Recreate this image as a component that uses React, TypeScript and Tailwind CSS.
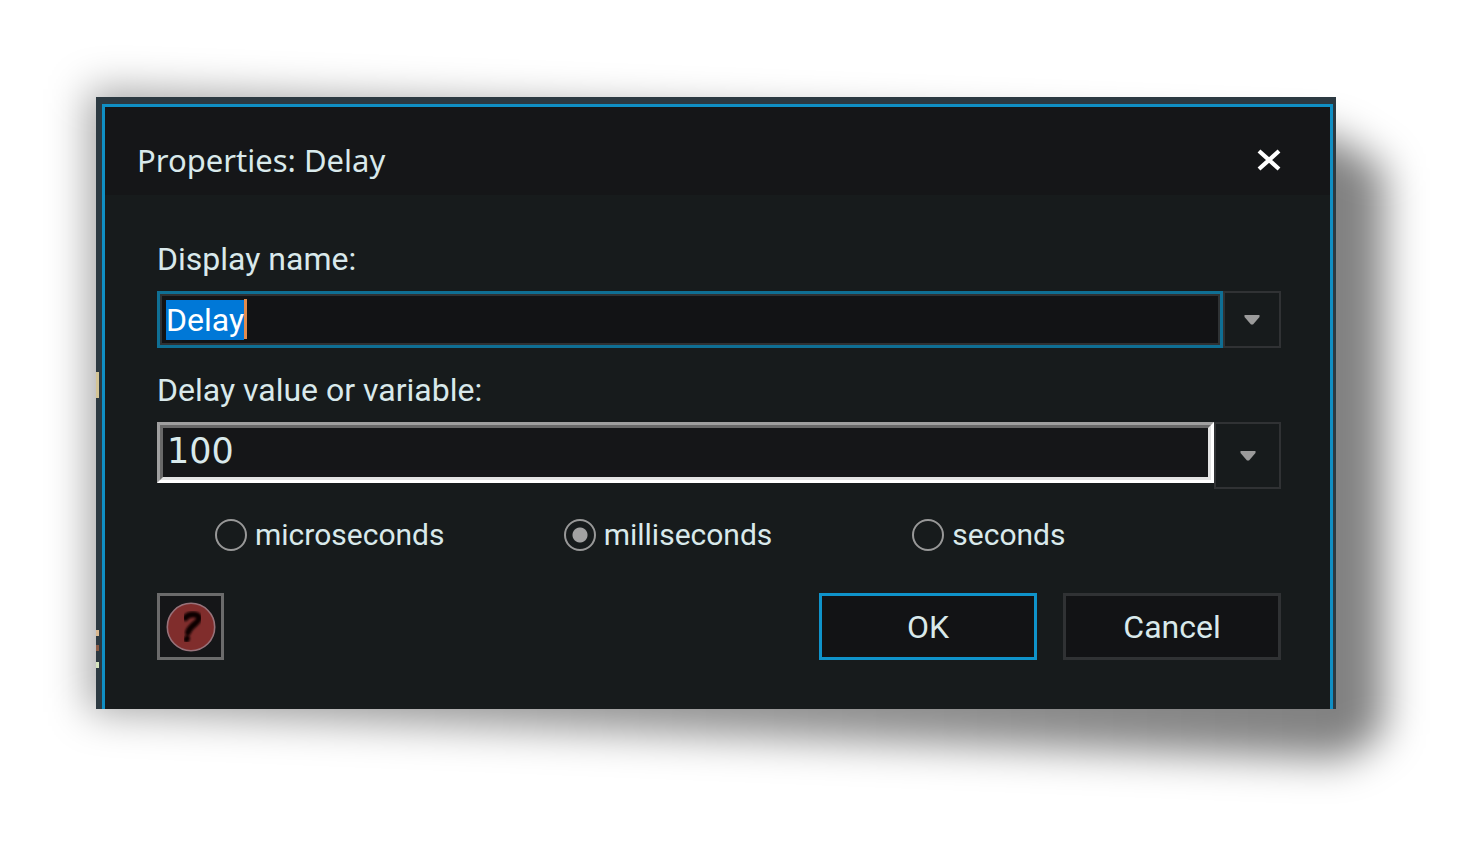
import { useState } from "react";

const UNITS = ["microseconds", "milliseconds", "seconds"];

function DropArrow() {
  return (
    <svg width="16" height="10" viewBox="0 0 16 10" aria-hidden="true">
      <path d="M.5 0h15v2L9 9.500H7L.5 2z" fill="#9b9b9b" />
    </svg>
  );
}

function HelpIcon() {
  return (
    <svg width="50" height="50" viewBox="0 0 50 50" aria-hidden="true">
      <defs>
        <filter id="mark-soft">
          <feGaussianBlur stdDeviation="0.8" />
        </filter>
      </defs>
      <circle cx="25" cy="25" r="23.7" fill="#802d2c" stroke="#97727a" strokeWidth="1.6" />
      <g
        fill="none"
        stroke="#0c0202"
        strokeWidth="6"
        strokeLinecap="round"
        strokeLinejoin="round"
        filter="url(#mark-soft)"
      >
        <path d="M19.500 16c3-5 14.500-4.500 13.500.5-1 5-9 7-11 14" />
        <path d="M20.500 37.500l.5-1" />
      </g>
    </svg>
  );
}

export default function App() {
  const [name, setName] = useState("Delay");
  const [value, setValue] = useState("100");
  const [unit, setUnit] = useState("milliseconds");

  return (
    <main className="min-h-screen overflow-hidden bg-white pt-[97px] pr-[138px] pb-16 pl-24 font-['Roboto','Liberation_Sans',sans-serif] text-[32px] leading-10 text-[#d9e9eb]">
      <div className="relative isolate">
        {/* Slanted drop shadow */}
        <div className="absolute -top-2 -right-12 -bottom-[50px] -left-2 -z-10 blur-[20px]" aria-hidden="true">
          <div className="h-full w-full bg-linear-to-r from-black/35 to-black/50 [clip-path:polygon(0_0,96%_7%,100%_12%,100%_96%,97%_100%,0_93%)]" />
        </div>

        <section
          role="dialog"
          aria-labelledby="dialog-title"
          className="relative bg-[#2c3941] pt-[7px] pr-[3px] pl-[6px]"
        >
          <span className="absolute top-[275px] left-0 h-[26px] w-[3px] bg-[#d3c496]" />
          <span className="absolute top-[533px] left-0 h-[6px] w-[3px] bg-[#d8b890]" />
          <span className="absolute top-[548px] left-0 h-[6px] w-[3px] bg-[#8a5a44]" />
          <span className="absolute top-[565px] left-0 h-[6px] w-[3px] bg-[#d5e3bd]" />

          <div className="border-x-[3px] border-t-[3px] border-[#108fc4] bg-[#171b1c]">
            <header className="flex h-[88px] items-center justify-between bg-[#151618] pt-[18px] pr-12 pl-8">
              <h1 id="dialog-title" className="font-['Noto_Sans','Open_Sans',sans-serif] text-[31px]">
                Properties: Delay
              </h1>
              <button type="button" aria-label="Close" className="py-2">
                <svg width="26" height="24" viewBox="0 0 26 24" aria-hidden="true">
                  <path d="M3 3l20 18M23 3L3 21" stroke="#fff" strokeWidth="4.200" />
                </svg>
              </button>
            </header>

            <form className="pt-11 pr-[49px] pb-[49px] pl-[52px]" onSubmit={(e) => e.preventDefault()}>
              <label htmlFor="display-name" className="block">
                Display name:
              </label>
              <div className="mt-3 flex h-[57px]">
                <div className="relative flex min-w-0 flex-1 border-[3px] border-[#0f6f94]">
                  <input
                    id="display-name"
                    type="text"
                    autoFocus
                    onFocus={(e) => e.currentTarget.select()}
                    value={name}
                    onChange={(e) => setName(e.target.value)}
                    className="min-w-0 flex-1 border-2 border-[#2f3234] bg-[#121315] pl-1 outline-none selection:bg-[#0078d7] selection:text-white"
                  />
                  <span className="absolute top-[5px] left-[84px] h-10 w-[3px] bg-[#e08b4e]" />
                </div>
                <button
                  type="button"
                  aria-label="Display name history"
                  className="flex w-[58px] items-center justify-center border-[2px] border-[#303234]"
                >
                  <DropArrow />
                </button>
              </div>

              <label htmlFor="delay-value" className="mt-[22px] block">
                Delay value or variable:
              </label>
              <div className="mt-3 flex h-[67px] items-start">
                <div className="flex h-[61px] min-w-0 flex-1 border-[3px] border-t-[#a0a0a0] border-r-white border-b-white border-l-[#a0a0a0]">
                  <input
                    id="delay-value"
                    type="text"
                    value={value}
                    onChange={(e) => setValue(e.target.value)}
                    className="min-w-0 flex-1 border-[3px] border-t-[#696969] border-r-[#e3e3e3] border-b-[#e3e3e3] border-l-[#696969] bg-[#151618] pb-1 pl-1 font-['DejaVu_Sans',sans-serif] text-[35px] outline-none"
                  />
                </div>
                <button
                  type="button"
                  aria-label="Delay value history"
                  className="flex h-full w-[67px] items-center justify-center border-[2px] border-[#303234]"
                >
                  <DropArrow />
                </button>
              </div>

              <div role="radiogroup" aria-label="Delay unit" className="mt-[26px] grid grid-cols-3 pr-5 pl-[58px]">
                {UNITS.map((u) => (
                  <label key={u} className="flex items-center gap-2 text-[30px] leading-10">
                    <input
                      type="radio"
                      name="unit"
                      value={u}
                      checked={unit === u}
                      onChange={() => setUnit(u)}
                      className="h-8 w-8 shrink-0 appearance-none rounded-full border-2 border-[#989898] checked:bg-[radial-gradient(circle,#a2a2a2_7px,transparent_8px)]"
                    />
                    {u}
                  </label>
                ))}
              </div>

              <div className="mt-[38px] flex h-[67px] gap-[26px]">
                <button
                  type="button"
                  aria-label="Help"
                  className="mr-auto flex w-[67px] items-center justify-center border-[3px] border-[#6b6b6b] bg-[#151618]"
                >
                  <HelpIcon />
                </button>
                <button type="submit" className="w-[218px] border-[3px] border-[#0f93ca] bg-[#121315]">
                  OK
                </button>
                <button type="button" className="w-[218px] border-[3px] border-[#303234] bg-[#121315]">
                  Cancel
                </button>
              </div>
            </form>
          </div>
        </section>
      </div>
    </main>
  );
}
